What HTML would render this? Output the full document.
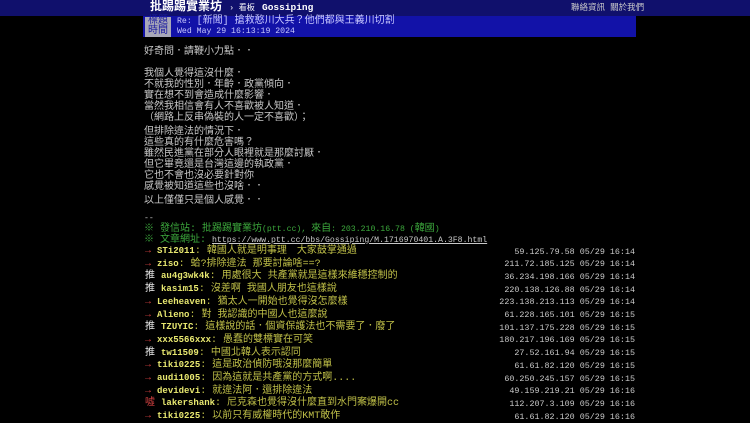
<!DOCTYPE html>
<html><head><meta charset="utf-8"><style>
body{margin:0;width:750px;height:422px;background:#000;overflow:hidden;position:relative;font-family:"Liberation Mono","Noto Sans CJK TC",monospace;font-size:10px;color:#c8c8c8}
.top{position:absolute;left:0;top:0;width:750px;height:16px;background:#10106c}
.l{font-size:8.2px}
.a{position:absolute;white-space:pre;line-height:11px}
.meta{position:absolute;left:143px;top:16px;width:493px;height:21px;background:#1212a8}
.lab{position:absolute;left:2px;width:26px;height:10px;background:#a8a8b8;color:#1a1aa0;font-size:10px;line-height:10px;text-align:center}
.g{color:#3ca83c}
.r{color:#d04040}.w{color:#e8e8e8}.u{color:#e8e870}.c{color:#c0c048}.ip{color:#c8c8c8;right:115px}
</style></head><body>
<div class="top"></div>
<div class="a" style="left:150px;top:2px;color:#fff;font-size:12px;font-weight:bold">批踢踢實業坊 <span style="font-size:8px;font-weight:normal">› 看板</span> <span style="font-size:9.5px">Gossiping</span></div>
<div class="a" style="left:571px;top:3px;color:#ccc;font-size:8.5px">聯絡資訊 關於我們</div>
<div class="meta"><div class="lab" style="top:1px">標題</div><div class="lab" style="top:11px">時間</div>
<div class="a" style="left:34px;top:0px;color:#c8c8ff"><span class="l">Re: </span>[新聞] 搶救憨川大兵？他們都與王義川切割</div>
<div class="a" style="left:34px;top:10px;color:#c8c8ff"><span class="l">Wed May 29 16:13:19 2024</span></div></div>
<div class="a" style="left:144px;top:47px">好奇問．請鞭小力點．．</div>
<div class="a" style="left:144px;top:69px;line-height:11px">我個人覺得這沒什麼．
不就我的性別．年齡．政黨傾向．
實在想不到會造成什麼影響．
當然我相信會有人不喜歡被人知道．
（網路上反串偽裝的人一定不喜歡）；</div>
<div class="a" style="left:144px;top:127px;line-height:11px">但排除違法的情況下．
這些真的有什麼危害嗎？
雖然民進黨在部分人眼裡就是那麼討厭．
但它畢竟還是台灣這邊的執政黨．
它也不會也沒必要針對你
感覺被知道這些也沒啥．．</div>
<div class="a" style="left:144px;top:196px">以上僅僅只是個人感覺．．</div>
<div class="a" style="left:144px;top:213px"><span class="l">--</span></div>
<div class="a g" style="left:144px;top:224px">※ 發信站: 批踢踢實業坊<span class="l">(ptt.cc), </span>來自<span class="l">: 203.210.16.78 (</span>韓國<span class="l">)</span></div>
<div class="a g" style="left:144px;top:235px">※ 文章網址: <span class="l" style="color:#c8c8c8;text-decoration:underline">https://www.ptt.cc/bbs/Gossiping/M.1716970401.A.3F8.html</span></div>
<div id="p"></div>
<script>
var d=[["→","STi2011","韓國人就是明事理　大家鼓掌通過","59.125.79.58 05/29 16:14"],
["→","ziso","蛤?排除違法 那要討論啥==?","211.72.185.125 05/29 16:14"],
["推","au4g3wk4k","用處很大 共產黨就是這樣來維穩控制的","36.234.198.166 05/29 16:14"],
["推","kasim15","沒差啊 我國人朋友也這樣說","220.138.126.88 05/29 16:14"],
["→","Leeheaven","猶太人一開始也覺得沒怎麼樣","223.138.213.113 05/29 16:14"],
["→","Alieno","對 我認識的中國人也這麼說","61.228.165.101 05/29 16:15"],
["推","TZUYIC","這樣說的話．個資保護法也不需要了．廢了","101.137.175.228 05/29 16:15"],
["→","xxx5566xxx","愚蠢的雙標實在可笑","180.217.196.169 05/29 16:15"],
["推","tw11509","中國北韓人表示認同","27.52.161.94 05/29 16:15"],
["→","tiki0225","這是政治偵防哦沒那麼簡單","61.61.82.120 05/29 16:15"],
["→","audi1005","因為這就是共產黨的方式啊....","60.250.245.157 05/29 16:15"],
["→","devidevi","就違法阿．還排除違法","49.159.219.21 05/29 16:16"],
["噓","lakershank","尼克森也覺得沒什麼直到水門案爆開cc","112.207.3.109 05/29 16:16"],
["→","tiki0225","以前只有威權時代的KMT敢作","61.61.82.120 05/29 16:16"]];
var h="";d.forEach(function(r,i){var t=246+i*12.7;var cl=r[0]=="推"?"w":"r";
h+='<div class="a" style="left:145px;top:'+t+'px"><span class="'+cl+'">'+r[0]+'</span> <span class="u" style="font-weight:bold;font-size:9px">'+r[1]+'</span><span class="c">: '+r[2]+'</span></div>';
h+='<div class="a ip l" style="top:'+(t+0.5)+'px;font-size:8.4px">'+r[3]+'</div>';});
document.getElementById("p").outerHTML=h;
</script>
</body></html>
